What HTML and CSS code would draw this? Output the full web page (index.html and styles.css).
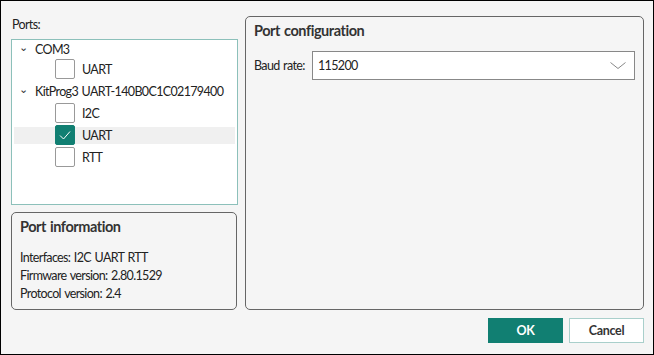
FILE: index.html
```html
<!DOCTYPE html>
<html>
	<head>
		<title>Ports</title>
		<link rel="stylesheet" href="styles.css">
	</head>
	<body>
		<div class="window">
			<div class="columns">
				<div class="left">
					<div class="label">Ports:</div>
					<div class="tree">
						<div class="node first"><span class="chev">&#8964;</span>COM3</div>
						<div class="leaf"><span class="box"></span>UART</div>
						<div class="node"><span class="chev">&#8964;</span>KitProg3 UART-140B0C1C02179400</div>
						<div class="leaf"><span class="box"></span>I2C</div>
						<div class="leaf selected"><span class="box checked">
							<svg width="20" height="20" viewBox="0 0 20 20"><path d="M5 10.5 L8.5 14 L15 6.5" fill="none" stroke="#fff" stroke-width="1"/></svg>
						</span>UART</div>
						<div class="leaf"><span class="box"></span>RTT</div>
					</div>
					<div class="group info">
						<h2>Port information</h2>
						<p>Interfaces: I2C UART RTT</p>
						<p>Firmware version: 2.80.1529</p>
						<p>Protocol version: 2.4</p>
					</div>
				</div>
				<div class="group config">
					<h2>Port configuration</h2>
					<div class="field">
						<label>Baud rate:</label>
						<div class="select">
							<span>115200</span>
							<svg width="16" height="8" viewBox="0 0 16 8"><path d="M0.5 0.5 L8 6.5 L15.5 0.5" fill="none" stroke="#888" stroke-width="1"/></svg>
						</div>
					</div>
				</div>
			</div>
			<div class="buttons">
				<button class="primary">OK</button>
				<button>Cancel</button>
			</div>
		</div>
	</body>
</html>
```

FILE: styles.css
```css
* {
	box-sizing: border-box;
	font-family: Lato, "Liberation Sans", sans-serif;
}
body {
	margin: 0;
}
.window {
	width: 654px;
	height: 355px;
	border: 1px solid #000;
	background-color: #f5f5f5;
	padding: 15px 9px 0 10px;
	color: #222;
	font-size: 12.5px;
	letter-spacing: -0.65px;
	word-spacing: 1px;
}
.columns {
	display: grid;
	grid-template-columns: 227px 399px;
	column-gap: 7px;
	height: 294px;
}
.left {
	display: flex;
	flex-direction: column;
}
	.label {
		height: 23px;
		padding: 1px 0 0 1px;
	}
	.tree {
		height: 166px;
		border: 1px solid #8cc0ba;
		background-color: #fff;
		padding: 0 2px;
	}
		.node {
			height: 22px;
			display: flex;
			align-items: center;
		}
		.node.first {
			height: 18px;
		}
		.chev {
			width: 21px;
			padding-left: 5px;
			font-size: 11px;
			line-height: 8px;
			height: 12px;
			color: #333;
		}
		.leaf {
			height: 22px;
			display: flex;
			align-items: center;
			padding-left: 41px;
		}
		.leaf.selected {
			background: linear-gradient(transparent 3px, #f0f0f0 3px, #f0f0f0 20px, transparent 20px);
		}
		.box {
			width: 20px;
			height: 20px;
			border: 1px solid #999;
			border-radius: 2px;
			background-color: #fff;
			margin-right: 7px;
		}
		.box.checked {
			background-color: #117f72;
			border-color: #117f72;
		}
			.box svg {
				display: block;
				margin: -1px;
			}
.group {
	border: 1px solid #666;
	border-radius: 5px;
}
	.group h2 {
		margin: 0;
		font-size: 14.5px;
		font-weight: bold;
		letter-spacing: -0.45px;
		color: #333;
	}
.info {
	margin-top: 7px;
	height: 98px;
	margin-right: 1px;
	padding: 5px 8px;
}
	.info h2 {
		margin-bottom: 14px;
	}
	.info p {
		margin: 0;
		height: 18px;
		line-height: 18px;
	}
.config {
	padding: 5px 8px;
}
	.field {
		display: flex;
		align-items: center;
		margin-top: 12px;
	}
		.field label {
			width: 58px;
		}
		.select {
			width: 323px;
			height: 29px;
			border: 1px solid #888;
			background-color: #fff;
			display: flex;
			align-items: center;
			justify-content: space-between;
			padding: 0 8px 0 5px;
		}
.buttons {
	display: flex;
	justify-content: flex-end;
	gap: 6px;
	margin-top: 8px;
}
	button {
		width: 75px;
		height: 25px;
		font-size: 12.5px;
		font-weight: bold;
		letter-spacing: -0.3px;
		color: #333;
		background-color: #fff;
		border: 1px solid #a9cfcb;
	}
	button.primary {
		background-color: #117f72;
		border-color: #117f72;
		color: #fff;
	}
```
